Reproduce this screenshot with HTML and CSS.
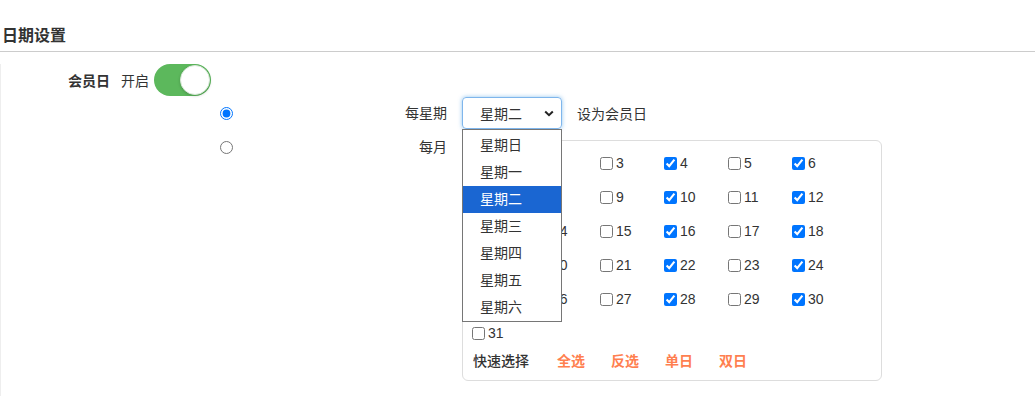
FILE: index.html
```html
<!DOCTYPE html>
<html lang="zh-CN">
<head>
    <meta charset="UTF-8">
    <title>日期设置</title>
    <link rel="stylesheet" href="styles.css">
</head>
<body>

<h3 class="section-title">日期设置</h3>

<div class="form">
    <div class="switch-row">
        <span class="field-label">会员日</span>
        <span class="switch-text">开启</span>
        <span class="switch on"><span class="knob"></span></span>
    </div>

    <div class="opt-row">
        <span class="opt-radio"><input type="radio" name="mode" checked></span>
        <span class="opt-label">每星期</span>
        <div class="opt-control weekly">
            <div class="select-wrap">
                <div class="select focus">
                    <span>星期二</span>
                    <svg class="chevron" width="10" height="7" viewBox="0 0 10 7"><path d="M1.2 1.5 L5 5.2 L8.8 1.5" fill="none" stroke="#222" stroke-width="2"/></svg>
                </div>
                <ul class="select-menu">
                    <li>星期日</li>
                    <li>星期一</li>
                    <li class="active">星期二</li>
                    <li>星期三</li>
                    <li>星期四</li>
                    <li>星期五</li>
                    <li>星期六</li>
                </ul>
            </div>
            <span class="hint">设为会员日</span>
        </div>
    </div>

    <div class="opt-row monthly-row">
        <span class="opt-radio"><input type="radio" name="mode"></span>
        <span class="opt-label">每月</span>
        <div class="opt-control">
            <div class="day-box">
                <div class="day-grid" id="dayGrid"></div>
                <div class="quick">
                    <span class="quick-title">快速选择</span>
                    <a href="#">全选</a>
                    <a href="#">反选</a>
                    <a href="#">单日</a>
                    <a href="#">双日</a>
                </div>
            </div>
        </div>
    </div>
</div>

<script>
    const grid = document.getElementById('dayGrid');
    for (let d = 1; d <= 31; d++) {
        const label = document.createElement('label');
        label.className = 'day';
        const box = document.createElement('input');
        box.type = 'checkbox';
        box.checked = d % 2 === 0 && d !== 31;
        label.appendChild(box);
        label.appendChild(document.createTextNode(d));
        grid.appendChild(label);
    }
</script>

</body>
</html>
```

FILE: styles.css
```css
* {
    margin: 0;
    padding: 0;
    box-sizing: border-box;
}

body {
    font-family: 'Liberation Sans', 'Noto Sans CJK SC', sans-serif;
    font-size: 14px;
    color: #333;
    background-color: #fff;
}

.section-title {
    font-size: 16px;
    font-weight: bold;
    line-height: 20px;
    padding: 26px 0 5px 2px;
    border-bottom: 1px solid #ccc;
}

.form {
    border-left: 1px solid #eee;
    min-height: 345px;
}

.switch-row {
    display: flex;
    align-items: center;
    height: 32px;
    margin-top: 12px;
}

.field-label {
    width: 109px;
    text-align: right;
    font-weight: bold;
}

.switch-text {
    margin-left: 11px;
    margin-right: 5px;
}

.switch {
    position: relative;
    width: 57px;
    height: 32px;
    border-radius: 16px;
    background-color: #ddd;
}

.switch.on {
    background-color: #5cb85c;
}

.switch .knob {
    position: absolute;
    top: 1px;
    right: 1px;
    width: 30px;
    height: 30px;
    border-radius: 50%;
    background-color: #fff;
    border: 1px solid #d8e8d8;
    box-shadow: 0 1px 3px rgba(0, 0, 0, 0.2);
}

.opt-row {
    display: flex;
    align-items: center;
    margin-top: 1px;
}

.opt-radio {
    width: 232px;
    padding-left: 219px;
    display: flex;
}

.opt-radio input {
    width: 13px;
    height: 13px;
    margin: 0;
}

.opt-label {
    width: 214px;
    text-align: right;
    line-height: 14px;
}

.opt-control {
    margin-left: 15px;
}

.weekly {
    display: flex;
    align-items: center;
}

.select-wrap {
    position: relative;
}

.select {
    width: 100px;
    height: 32px;
    display: flex;
    align-items: center;
    justify-content: space-between;
    padding: 0 7px 0 17px;
    border: 1px solid #7fb6ec;
    border-radius: 4px;
    box-shadow: 0 0 4px rgba(102, 175, 233, 0.7);
}

.select-menu {
    position: absolute;
    top: 100%;
    left: 0;
    width: 100px;
    list-style: none;
    padding-top: 2px;
    background-color: #fff;
    border: 1px solid #767676;
    z-index: 10;
}

.select-menu li {
    height: 27px;
    line-height: 27px;
    padding-left: 17px;
}

.select-menu li.active {
    background-color: #1a66d2;
    color: #fff;
}

.hint {
    margin-left: 15px;
}

.monthly-row {
    align-items: flex-start;
    margin-top: 11px;
}

.monthly-row .opt-radio input {
    margin-top: 1px;
}

.day-box {
    width: 420px;
    height: 241px;
    border: 1px solid #ddd;
    border-radius: 6px;
    padding: 5px 0 0 9px;
}

.day-grid {
    display: grid;
    grid-template-columns: repeat(6, 64px);
    grid-auto-rows: 34px;
}

.day {
    display: flex;
    align-items: center;
}

.day input {
    width: 13px;
    height: 13px;
    margin: 0 3px 0 0;
}

.quick {
    display: flex;
    align-items: center;
    height: 20px;
    padding-left: 1px;
}

.quick-title {
    font-weight: 500;
    margin-right: 2px;
}

.quick a {
    color: #ff7f50;
    font-weight: bold;
    text-decoration: none;
    margin-left: 26px;
}
```
